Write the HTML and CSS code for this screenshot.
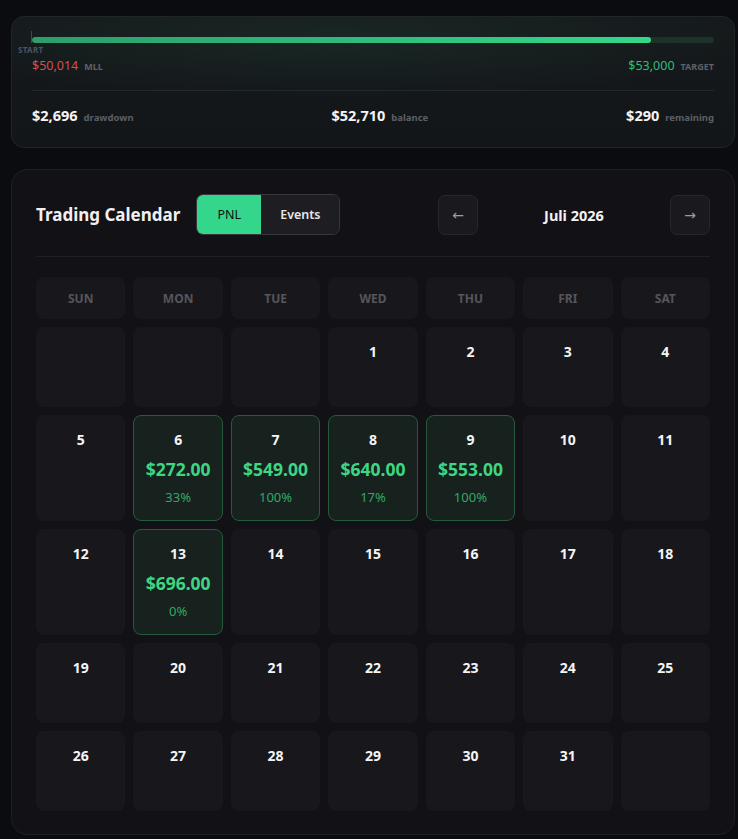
FILE: index.html
```html
<!DOCTYPE html>
<html>
<head>
<meta charset="utf-8">
<link rel="stylesheet" href="styles.css">
</head>
<body>
<div class="page">
  <section class="progress-card">
    <div class="bar-wrap">
      <div class="bar-track"><div class="bar-fill" style="width:90.8%"></div></div>
      <div class="start-marker"></div>
      <div class="start-label">START</div>
    </div>
    <div class="limits">
      <div class="limit"><span class="val red">$50,014</span><span class="tag">MLL</span></div>
      <div class="limit"><span class="val green">$53,000</span><span class="tag">TARGET</span></div>
    </div>
    <div class="stats">
      <div class="stat"><span class="num">$2,696</span><span class="sub">drawdown</span></div>
      <div class="stat"><span class="num">$52,710</span><span class="sub">balance</span></div>
      <div class="stat"><span class="num">$290</span><span class="sub">remaining</span></div>
    </div>
  </section>

  <section class="cal-card">
    <header class="cal-head">
      <div class="head-left">
        <h2 class="title">Trading Calendar</h2>
        <div class="toggle">
          <span class="tg tg-on">PNL</span>
          <span class="tg tg-off">Events</span>
        </div>
      </div>
      <div class="nav">
        <button class="nav-btn">&#8592;</button>
        <span class="month">Juli 2026</span>
        <button class="nav-btn">&#8594;</button>
      </div>
    </header>
    <div class="grid">
      <div class="wd">SUN</div><div class="wd">MON</div><div class="wd">TUE</div><div class="wd">WED</div><div class="wd">THU</div><div class="wd">FRI</div><div class="wd">SAT</div>

      <div class="day"></div><div class="day"></div><div class="day"></div>
      <div class="day"><span class="dn">1</span></div>
      <div class="day"><span class="dn">2</span></div>
      <div class="day"><span class="dn">3</span></div>
      <div class="day"><span class="dn">4</span></div>

      <div class="day"><span class="dn">5</span></div>
      <div class="day win"><span class="dn">6</span><span class="amt">$272.00</span><span class="pct">33%</span></div>
      <div class="day win"><span class="dn">7</span><span class="amt">$549.00</span><span class="pct">100%</span></div>
      <div class="day win"><span class="dn">8</span><span class="amt">$640.00</span><span class="pct">17%</span></div>
      <div class="day win"><span class="dn">9</span><span class="amt">$553.00</span><span class="pct">100%</span></div>
      <div class="day"><span class="dn">10</span></div>
      <div class="day"><span class="dn">11</span></div>

      <div class="day"><span class="dn">12</span></div>
      <div class="day win"><span class="dn">13</span><span class="amt">$696.00</span><span class="pct">0%</span></div>
      <div class="day"><span class="dn">14</span></div>
      <div class="day"><span class="dn">15</span></div>
      <div class="day"><span class="dn">16</span></div>
      <div class="day"><span class="dn">17</span></div>
      <div class="day"><span class="dn">18</span></div>

      <div class="day"><span class="dn">19</span></div>
      <div class="day"><span class="dn">20</span></div>
      <div class="day"><span class="dn">21</span></div>
      <div class="day"><span class="dn">22</span></div>
      <div class="day"><span class="dn">23</span></div>
      <div class="day"><span class="dn">24</span></div>
      <div class="day"><span class="dn">25</span></div>

      <div class="day"><span class="dn">26</span></div>
      <div class="day"><span class="dn">27</span></div>
      <div class="day"><span class="dn">28</span></div>
      <div class="day"><span class="dn">29</span></div>
      <div class="day"><span class="dn">30</span></div>
      <div class="day"><span class="dn">31</span></div>
      <div class="day"></div>
    </div>
  </section>
</div>
</body>
</html>
```

FILE: styles.css
```css
* { box-sizing: border-box; }
html, body { margin: 0; padding: 0; }
body {
  background: #0b0c10;
  font-family: "Noto Sans", "Open Sans", sans-serif;
  color: #f2f2f4;
  width: 738px;
  height: 839px;
  overflow: hidden;
}
.page {
  padding: 16px 0 0 11px;
  width: 746px;
  display: flex;
  flex-direction: column;
  gap: 21px;
}

/* progress card */
.progress-card {
  width: 724px;
  height: 132px;
  border: 1px solid #20252a;
  border-radius: 13px;
  background:
    radial-gradient(ellipse 420px 60px at 45% 22px, rgba(40, 90, 70, 0.22), rgba(40, 90, 70, 0) 100%),
    linear-gradient(180deg, #15191b 0%, #131619 100%);
  padding: 20px 20px 0 20px;
}
.bar-wrap {
  position: relative;
  height: 6px;
}
.bar-track {
  height: 6px;
  border-radius: 3px;
  background: #1d3229;
  overflow: hidden;
}
.bar-fill {
  height: 100%;
  border-radius: 3px;
  background: linear-gradient(90deg, #2c9d6b 0%, #33d88b 100%);
}
.start-marker {
  position: absolute;
  left: -1px;
  top: -6px;
  width: 1px;
  height: 12px;
  background: #3c4656;
}
.start-label {
  position: absolute;
  left: -14px;
  top: 8px;
  font-size: 8px;
  font-weight: 700;
  letter-spacing: 0.3px;
  color: #4a5464;
  line-height: 10px;
}
.limits {
  margin-top: 14px;
  height: 18px;
  display: flex;
  justify-content: space-between;
  align-items: center;
}
.limit { display: flex; align-items: baseline; gap: 6px; line-height: 18px; }
.val { font-size: 12.5px; }
.red { color: #d25050; }
.green { color: #2ebd78; }
.tag {
  font-size: 9px;
  font-weight: 700;
  color: #5d6168;
}
.stats {
  margin-top: 15px;
  border-top: 1px solid #22272b;
  padding-top: 15px;
  height: 36px;
  display: flex;
  justify-content: space-between;
  align-items: center;
}
.stat { display: flex; align-items: baseline; gap: 6px; line-height: 20px; }
.num { font-size: 14.5px; font-weight: 700; color: #f4f4f6; }
.sub { font-size: 9.5px; font-weight: 700; color: #5b5f66; }

/* calendar card */
.cal-card {
  width: 724px;
  border: 1px solid #1e1e23;
  border-radius: 16px;
  background: #121216;
  padding: 24px 24px 23px 24px;
}
.cal-head {
  display: flex;
  justify-content: space-between;
  align-items: center;
  height: 41px;
}
.head-left { display: flex; align-items: center; gap: 16px; }
.title {
  margin: 0;
  font-size: 17px;
  font-weight: 700;
  color: #f0f0f2;
}
.toggle {
  display: flex;
  height: 41px;
  border: 1px solid #36363c;
  border-radius: 7px;
  overflow: hidden;
}
.tg {
  display: flex;
  align-items: center;
  justify-content: center;
  font-size: 12.5px;
}
.tg-on { width: 64px; background: #34d68c; color: #08130d; }
.tg-off { width: 78px; background: #1e1e22; color: #e8e8ea; font-weight: 600; }
.nav {
  display: flex;
  align-items: center;
  width: 272px;
}
.nav-btn {
  width: 40px;
  height: 40px;
  border: 1px solid #26262c;
  border-radius: 7px;
  background: #1a1a1e;
  color: #9c9ca2;
  font-family: "DejaVu Sans", sans-serif;
  font-size: 14px;
  padding: 0;
  display: flex;
  align-items: center;
  justify-content: center;
}
.month {
  flex: 1;
  text-align: center;
  font-size: 14.5px;
  font-weight: 700;
  color: #f2f2f4;
}
.grid {
  margin-top: 21px;
  border-top: 1px solid #1f1f25;
  padding-top: 20px;
  display: grid;
  grid-template-columns: repeat(7, 1fr);
  gap: 8px;
}
.wd {
  height: 42px;
  border-radius: 8px;
  background: #18181c;
  color: #55555b;
  font-size: 12px;
  font-weight: 700;
  display: flex;
  align-items: center;
  justify-content: center;
}
.day {
  min-height: 80px;
  border-radius: 8px;
  background: #18181c;
  border: 1px solid transparent;
  padding: 13px 4px 13px;
  display: flex;
  flex-direction: column;
  align-items: center;
}
.dn {
  font-size: 14px;
  font-weight: 700;
  line-height: 22px;
  color: #f4f4f6;
}
.win {
  background: #17211d;
  border-color: #265a3c;
}
.amt {
  margin-top: 6px;
  font-size: 17.5px;
  font-weight: 700;
  line-height: 24px;
  color: #3dd684;
}
.pct {
  margin-top: 6px;
  font-size: 13px;
  line-height: 20px;
  color: #33a86a;
}
```
